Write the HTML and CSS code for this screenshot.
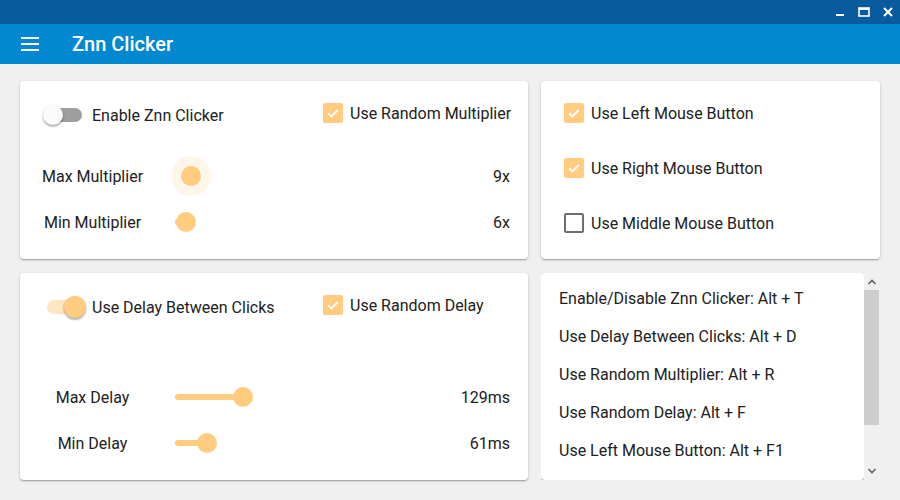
FILE: index.html
```html
<!DOCTYPE html>
<html>
<head>
<meta charset="utf-8">
<link rel="stylesheet" href="styles.css">
</head>
<body>
<div class="titlebar">
  <span class="winbtn"><svg width="24" height="24" viewBox="0 0 24 24"><rect x="8" y="14" width="8" height="2" fill="#fff"/></svg></span>
  <span class="winbtn"><svg width="24" height="24" viewBox="0 0 24 24"><rect x="7" y="8" width="10" height="8" fill="none" stroke="#fff" stroke-width="1.6"/><rect x="7" y="8" width="10" height="2" fill="#fff"/></svg></span>
  <span class="winbtn"><svg width="24" height="24" viewBox="0 0 24 24"><path d="M8 8 L16 16 M16 8 L8 16" stroke="#fff" stroke-width="2"/></svg></span>
</div>
<header class="appbar">
  <svg class="menu" width="18" height="14" viewBox="0 0 18 14"><rect x="0" y="0" width="18" height="2" fill="#fff"/><rect x="0" y="6" width="18" height="2" fill="#fff"/><rect x="0" y="12" width="18" height="2" fill="#fff"/></svg>
  <h1 class="title">Znn Clicker</h1>
</header>
<main class="grid">
  <section class="card card-mult">
    <div class="head">
      <div class="switch-item">
        <span class="switch off"><span class="track"></span><span class="knob"></span></span>
        <span>Enable Znn Clicker</span>
      </div>
      <div class="check-item">
        <span class="box on"><svg width="20" height="20" viewBox="0 0 20 20"><path d="M5.2 10.2 L8.4 13.4 L14.8 7" fill="none" stroke="#fff" stroke-width="2"/></svg></span>
        <span>Use Random Multiplier</span>
      </div>
    </div>
    <div class="sliders">
      <div class="slider-row">
        <span class="s-label">Max Multiplier</span>
        <span class="slider"><span class="fill" style="width:16px"></span><span class="thumb halo" style="left:6px"></span></span>
        <span class="s-value">9x</span>
      </div>
      <div class="slider-row">
        <span class="s-label">Min Multiplier</span>
        <span class="slider"><span class="fill" style="width:11px"></span><span class="thumb" style="left:1px"></span></span>
        <span class="s-value">6x</span>
      </div>
    </div>
  </section>
  <section class="card card-buttons">
    <div class="check-item">
      <span class="box on"><svg width="20" height="20" viewBox="0 0 20 20"><path d="M5.2 10.2 L8.4 13.4 L14.8 7" fill="none" stroke="#fff" stroke-width="2"/></svg></span>
      <span>Use Left Mouse Button</span>
    </div>
    <div class="check-item">
      <span class="box on"><svg width="20" height="20" viewBox="0 0 20 20"><path d="M5.2 10.2 L8.4 13.4 L14.8 7" fill="none" stroke="#fff" stroke-width="2"/></svg></span>
      <span>Use Right Mouse Button</span>
    </div>
    <div class="check-item">
      <span class="box off"></span>
      <span>Use Middle Mouse Button</span>
    </div>
  </section>
  <section class="card card-delay">
    <div class="head">
      <div class="switch-item">
        <span class="switch on"><span class="track"></span><span class="knob"></span></span>
        <span>Use Delay Between Clicks</span>
      </div>
      <div class="check-item">
        <span class="box on"><svg width="20" height="20" viewBox="0 0 20 20"><path d="M5.2 10.2 L8.4 13.4 L14.8 7" fill="none" stroke="#fff" stroke-width="2"/></svg></span>
        <span>Use Random Delay</span>
      </div>
    </div>
    <div class="sliders">
      <div class="slider-row">
        <span class="s-label">Max Delay</span>
        <span class="slider"><span class="fill" style="width:68px"></span><span class="thumb" style="left:58px"></span></span>
        <span class="s-value">129ms</span>
      </div>
      <div class="slider-row">
        <span class="s-label">Min Delay</span>
        <span class="slider"><span class="fill" style="width:32px"></span><span class="thumb" style="left:22px"></span></span>
        <span class="s-value">61ms</span>
      </div>
    </div>
  </section>
  <div class="scroll-area">
    <section class="card card-keys">
      <div class="key">Enable/Disable Znn Clicker: Alt + T</div>
      <div class="key">Use Delay Between Clicks: Alt + D</div>
      <div class="key">Use Random Multiplier: Alt + R</div>
      <div class="key">Use Random Delay: Alt + F</div>
      <div class="key">Use Left Mouse Button: Alt + F1</div>
    </section>
    <div class="scrollbar">
      <svg class="arrow" width="16" height="17" viewBox="0 0 16 17"><path d="M4.5 11 L8 7.5 L11.5 11" fill="none" stroke="#606060" stroke-width="1.6"/></svg>
      <div class="sb-track"><div class="sb-thumb"></div></div>
      <svg class="arrow" width="16" height="17" viewBox="0 0 16 17"><path d="M4.5 6 L8 9.5 L11.5 6" fill="none" stroke="#606060" stroke-width="1.6"/></svg>
    </div>
  </div>
</main>
</body>
</html>
```
FILE: styles.css
```css
* { box-sizing: border-box; }
html, body { margin: 0; padding: 0; }
body {
  width: 900px;
  height: 500px;
  overflow: hidden;
  background: #f0f0f0;
  font-family: Roboto, "Noto Sans", sans-serif;
  font-size: 16px;
  color: #212121;
}
.titlebar {
  height: 24px;
  background: #0a5a9e;
  display: flex;
  justify-content: flex-end;
}
.winbtn { width: 24px; height: 24px; display: block; }
.winbtn svg { display: block; }
.appbar {
  height: 40px;
  background: #0288d1;
  display: flex;
  align-items: center;
  padding-left: 21px;
}
.menu { display: block; }
.title {
  margin: 0 0 0 33px;
  font-size: 20px;
  font-weight: 500;
  color: #fff;
}
.grid {
  display: grid;
  grid-template-columns: 508px 339px;
  grid-template-rows: 178px 207px;
  column-gap: 13px;
  row-gap: 14px;
  padding: 17px 0 0 20px;
}
.card {
  background: #fff;
  border-radius: 4px;
  box-shadow: 0 1px 3px rgba(0,0,0,0.2), 0 1px 1px rgba(0,0,0,0.12), 0 2px 1px -1px rgba(0,0,0,0.1);
}
.card-mult, .card-delay {
  padding: 20px 18px 0 22px;
}
.head {
  display: flex;
  align-items: flex-start;
  height: 24px;
}
.switch-item {
  display: flex;
  align-items: center;
  height: 24px;
  margin-top: 2px;
  width: 281px;
  flex: none;
  white-space: nowrap;
}
.switch {
  position: relative;
  width: 50px;
  height: 24px;
  flex: none;
}
.switch .track {
  position: absolute;
  left: 3px;
  top: 5px;
  width: 37px;
  height: 14px;
  border-radius: 7px;
  background: #9e9e9e;
}
.switch .knob {
  position: absolute;
  top: 2px;
  left: 1px;
  width: 20px;
  height: 20px;
  border-radius: 50%;
  background: #fafafa;
  box-shadow: 0 2px 2px rgba(0,0,0,0.2), 0 1px 3px rgba(0,0,0,0.2);
}
.switch.on .track { background: #ffe5c0; left: 5px; }
.switch.on .knob {
  left: 22px;
  top: 1px;
  width: 22px;
  height: 22px;
  background: #ffcc80;
}
.check-item {
  display: flex;
  align-items: center;
  height: 24px;
  white-space: nowrap;
}
.box {
  width: 20px;
  height: 20px;
  border-radius: 2px;
  margin-right: 7px;
  flex: none;
}
.box svg { display: block; }
.box.on { background: #ffcc80; }
.box.off { border: 2px solid #6e6e6e; }
.card-mult .sliders { margin-top: 28px; }
.card-delay .sliders { margin-top: 57px; }
.slider-row {
  display: flex;
  align-items: center;
  height: 46px;
}
.s-label {
  width: 101px;
  text-align: center;
  white-space: nowrap;
}
.slider {
  position: relative;
  margin-left: 32px;
  width: 250px;
  height: 20px;
}
.slider .fill {
  position: absolute;
  left: 0;
  top: 7px;
  height: 6px;
  border-radius: 3px;
  background: #ffcc80;
}
.slider .thumb {
  position: absolute;
  top: 0;
  width: 20px;
  height: 20px;
  border-radius: 50%;
  background: #ffcc80;
}
.slider .thumb.halo { box-shadow: 0 0 0 10px #fff6ea; }
.s-value { margin-left: auto; }
.card-buttons {
  padding: 20px 0 0 23px;
  display: flex;
  flex-direction: column;
  gap: 31px;
}
.scroll-area {
  display: flex;
  height: 207px;
  overflow: hidden;
}
.card-keys {
  width: 323px;
  height: 207px;
  padding: 7px 0 0 18px;
  overflow: hidden;
}
.key {
  height: 38px;
  line-height: 38px;
  white-space: nowrap;
}
.scrollbar {
  width: 16px;
  display: flex;
  flex-direction: column;
  background: #f0f0f0;
}
.arrow { display: block; flex: none; }
.sb-track { flex: 1; }
.sb-thumb {
  width: 15px;
  height: 135px;
  background: #cdcdcd;
}
```
